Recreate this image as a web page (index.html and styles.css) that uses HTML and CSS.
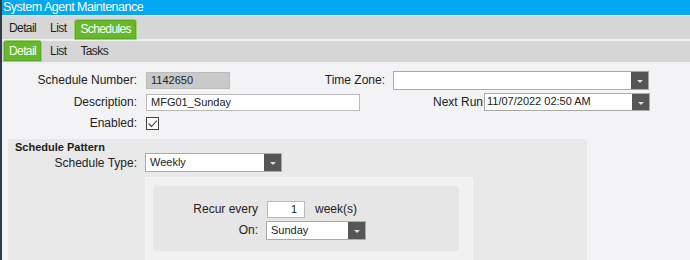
FILE: index.html
```html
<!DOCTYPE html>
<html lang="en">
<head>
    <meta charset="UTF-8">
    <title>System Agent Maintenance</title>
    <link rel="stylesheet" href="styles.css">
</head>
<body>
    <div class="window">
        <div class="titlebar">System Agent Maintenance</div>

        <div class="tabs top-tabs">
            <span class="tab">Detail</span>
            <span class="tab">List</span>
            <span class="tab active">Schedules</span>
        </div>

        <div class="tabs sub-tabs">
            <span class="tab active">Detail</span>
            <span class="tab">List</span>
            <span class="tab">Tasks</span>
        </div>

        <div class="content">
            <div class="row row-first">
                <label class="lbl">Schedule Number:</label>
                <div class="field readonly num">1142650</div>
                <label class="lbl lbl-tz">Time Zone:</label>
                <div class="select tz">
                    <span class="value"></span>
                    <span class="arrow"></span>
                </div>
            </div>

            <div class="row row-second">
                <label class="lbl">Description:</label>
                <div class="field desc">MFG01_Sunday</div>
                <label class="lbl lbl-next">Next Run</label>
                <div class="select next">
                    <span class="value">11/07/2022 02:50 AM</span>
                    <span class="arrow"></span>
                </div>
            </div>

            <div class="row row-third">
                <label class="lbl">Enabled:</label>
                <span class="checkbox">
                    <svg width="11" height="11" viewBox="0 0 11 11">
                        <path d="M1.5 5.5 L4.5 8.5 L10 2.5" fill="none" stroke="#333" stroke-width="1.1"/>
                    </svg>
                </span>
            </div>

            <div class="pattern">
                <div class="pattern-title">Schedule Pattern</div>
                <div class="row row-type">
                    <label class="lbl">Schedule Type:</label>
                    <div class="select type">
                        <span class="value">Weekly</span>
                        <span class="arrow"></span>
                    </div>
                </div>

                <div class="weekly-outer">
                    <div class="weekly-inner">
                        <div class="recur">
                            <span class="wlbl">Recur every</span>
                            <div class="field count">1</div>
                            <span>week(s)</span>
                        </div>
                        <div class="recur">
                            <span class="wlbl">On:</span>
                            <div class="select day">
                                <span class="value">Sunday</span>
                                <span class="arrow"></span>
                            </div>
                        </div>
                    </div>
                </div>
            </div>
        </div>
    </div>
</body>
</html>
```

FILE: styles.css
```css
* {
    box-sizing: border-box;
    margin: 0;
    padding: 0;
}

body {
    width: 690px;
    height: 260px;
    overflow: hidden;
    font-family: 'Liberation Sans', Arial, sans-serif;
    font-size: 12px;
    color: #222;
    background-color: #f3f3f5;
}

.window {
    height: 260px;
    overflow: hidden;
    border-left: 2px solid #2e3b48;
    display: flex;
    flex-direction: column;
}

.titlebar {
    height: 16px;
    flex-shrink: 0;
    background-color: #03a9f0;
    color: white;
    font-size: 12.5px;
    letter-spacing: -0.5px;
    line-height: 15px;
    padding-left: 1px;
    border-bottom: 1px solid #e4f4fb;
}

.tabs {
    display: flex;
    flex-shrink: 0;
    align-items: flex-end;
    gap: 2px;
    padding-left: 1px;
    background-color: #d6d6d6;
    border-bottom: 2px solid #f0f0f0;
}

.top-tabs {
    height: 25px;
}

.sub-tabs {
    height: 23px;
}

.tab {
    padding: 0 5px;
    line-height: 20px;
    font-size: 12px;
    letter-spacing: -0.6px;
    color: #1e1e1e;
    border: 1px solid transparent;
}

.top-tabs .tab {
    line-height: 19px;
}

.top-tabs .tab.active {
    margin-bottom: -1px;
}

.tab.active {
    background-color: #66b82c;
    color: white;
    border: 1px solid #9fd26c;
    border-radius: 3px 3px 0 0;
    box-shadow: inset 0 0 0 1px #5aa823;
}

.content {
    flex: 1;
    padding-top: 6px;
}

.row {
    display: flex;
    align-items: center;
}

.lbl {
    width: 135px;
    text-align: right;
    margin-right: 9px;
    color: #222;
}

.field {
    height: 17px;
    line-height: 15px;
    border: 1px solid #b9b9b9;
    background-color: white;
    padding: 0 4px;
    font-size: 11px;
    color: #222;
}

.field.readonly {
    background-color: #c9c9c9;
    border-color: #bbb;
}

.num {
    width: 84px;
}

.desc {
    width: 214px;
}

.lbl-tz {
    width: 155px;
    margin-right: 8px;
}

.lbl-next {
    width: 123px;
    margin-right: 1px;
}

.select {
    display: flex;
    height: 19px;
    border: 1px solid #aaa;
    background-color: white;
    font-size: 11px;
}

.select .value {
    flex: 1;
    padding-left: 4px;
    line-height: 17px;
}

.select .arrow {
    width: 17px;
    background-color: #565656;
    position: relative;
}

.select .arrow::after {
    content: "";
    position: absolute;
    left: 6px;
    top: 8px;
    border-left: 3px solid transparent;
    border-right: 3px solid transparent;
    border-top: 3px solid #ddd;
}

.tz {
    width: 256px;
}

.next {
    width: 166px;
    height: 18px;
}

.next .value {
    padding-left: 2px;
    line-height: 15px;
}

.row-first {
    height: 20px;
}

.row-second {
    margin-top: 3px;
    height: 18px;
}

.row-third {
    margin-top: 5px;
    height: 14px;
}

.checkbox {
    width: 13px;
    height: 13px;
    border: 1px solid #444;
    background-color: white;
    display: flex;
    align-items: center;
    justify-content: center;
}

.pattern {
    margin: 9px 0 0 6px;
    width: 579px;
    height: 130px;
    background-color: #e9e9e9;
    border-radius: 0 3px 0 0;
    padding-top: 2px;
}

.pattern-title {
    font-size: 11px;
    font-weight: bold;
    padding-left: 7px;
    line-height: 12px;
    color: #1c1c1c;
}

.row-type {
    height: 19px;
}

.row-type .lbl {
    width: 129px;
    margin-right: 8px;
}

.type {
    width: 137px;
}

.weekly-outer {
    margin: 5px 0 0 137px;
    width: 328px;
    height: 90px;
    background-color: #f1f1f1;
    border: 1px solid #f6f6f6;
    border-radius: 2px;
    padding: 8px 0 0 7px;
}

.weekly-inner {
    width: 306px;
    height: 65px;
    background-color: #e6e6e6;
    border-radius: 4px;
    padding-top: 14px;
    display: flex;
    flex-direction: column;
    gap: 3px;
}

.recur {
    display: flex;
    align-items: center;
    height: 18px;
}

.wlbl {
    width: 105px;
    text-align: right;
    margin-right: 9px;
}

.count {
    width: 38px;
    text-align: right;
    margin-right: 10px;
    padding-right: 7px;
}

.day {
    width: 100px;
    height: 19px;
    margin-left: -1px;
}
```
